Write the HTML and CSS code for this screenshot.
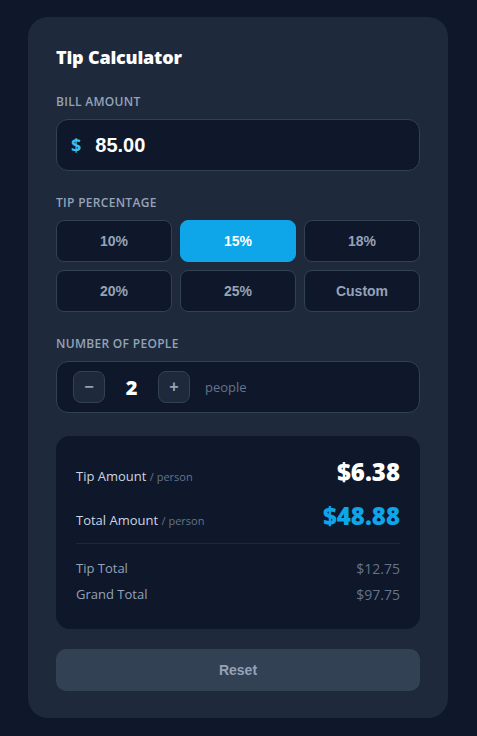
FILE: index.html
```html
<!DOCTYPE html>
<html lang="en">
<head>
<meta charset="utf-8">
<title>Tip Calculator</title>
<link rel="stylesheet" href="styles.css">
</head>
<body>
<main class="card">
  <h1 class="title">Tip Calculator</h1>

  <section class="section">
    <div class="label">Bill Amount</div>
    <div class="bill">
      <span class="currency">$</span>
      <input class="bill-input" type="text" value="85.00">
    </div>
  </section>

  <section class="section">
    <div class="label">Tip Percentage</div>
    <div class="tips">
      <button class="tip">10%</button>
      <button class="tip active">15%</button>
      <button class="tip">18%</button>
      <button class="tip">20%</button>
      <button class="tip">25%</button>
      <button class="tip">Custom</button>
    </div>
  </section>

  <section class="section">
    <div class="label">Number of People</div>
    <div class="people">
      <button class="step">&minus;</button>
      <span class="count">2</span>
      <button class="step">+</button>
      <span class="people-unit">people</span>
    </div>
  </section>

  <section class="results">
    <div class="row main">
      <span class="row-label">Tip Amount <small>/ person</small></span>
      <span class="big">$6.38</span>
    </div>
    <div class="row main">
      <span class="row-label">Total Amount <small>/ person</small></span>
      <span class="big accent">$48.88</span>
    </div>
    <div class="divider"></div>
    <div class="row minor">
      <span class="minor-label">Tip Total</span>
      <span class="minor-value">$12.75</span>
    </div>
    <div class="row minor">
      <span class="minor-label">Grand Total</span>
      <span class="minor-value">$97.75</span>
    </div>
  </section>

  <button class="reset">Reset</button>
</main>
</body>
</html>
```

FILE: styles.css
```css
* { box-sizing: border-box; }

html, body {
  margin: 0;
  padding: 0;
  background: #0f172a;
}

body {
  font-family: "Open Sans", "Noto Sans", sans-serif;
  color: #e2e8f0;
  padding: 17px 29px 18px 28px;
}

.card {
  width: 420px;
  background: #1e293b;
  border-radius: 20px;
  padding: 28px 28px 27px;
}

.title {
  margin: 0 0 25px;
  font-size: 18px;
  line-height: 24px;
  font-weight: 800;
  color: #ffffff;
  letter-spacing: -0.2px;
}

.section { margin-bottom: 24px; }
.section:nth-of-type(3) { margin-bottom: 23px; }

.label {
  font-size: 12px;
  line-height: 16px;
  font-weight: 600;
  text-transform: uppercase;
  letter-spacing: 0.3px;
  color: #94a3b8;
  margin-bottom: 9px;
}

.bill {
  height: 52px;
  display: flex;
  align-items: center;
  gap: 14px;
  padding: 0 14px;
  background: #0f172a;
  border: 1px solid #334155;
  border-radius: 12px;
}

.currency {
  font-size: 18px;
  font-weight: 700;
  color: #38bdf8;
}

.bill-input {
  flex: 1;
  min-width: 0;
  border: 0;
  outline: none;
  background: transparent;
  color: #ffffff;
  font-family: "Liberation Sans", Arial, sans-serif;
  font-size: 20px;
  font-weight: 700;
  padding: 0;
}

.tips {
  display: grid;
  grid-template-columns: repeat(3, 1fr);
  gap: 8px;
}

.tip {
  height: 42px;
  background: #0f172a;
  border: 1px solid #334155;
  border-radius: 8px;
  color: #94a3b8;
  font-family: "Liberation Sans", Arial, sans-serif;
  font-size: 14px;
  font-weight: 700;
  cursor: pointer;
}

.tip.active {
  background: #0ea5e9;
  border-color: #0ea5e9;
  color: #ffffff;
}

.people {
  height: 52px;
  display: flex;
  align-items: center;
  gap: 12px;
  padding: 0 16px;
  background: #0f172a;
  border: 1px solid #334155;
  border-radius: 12px;
}

.step {
  width: 32px;
  height: 32px;
  padding: 0;
  background: #1e293b;
  border: 1px solid #334155;
  border-radius: 8px;
  color: #94a3b8;
  font-family: "Liberation Sans", Arial, sans-serif;
  font-size: 16px;
  font-weight: 700;
  line-height: 1;
}

.count {
  min-width: 29px;
  text-align: center;
  font-size: 20px;
  font-weight: 800;
  color: #ffffff;
}

.people-unit {
  margin-left: 3px;
  font-size: 13px;
  color: #64748b;
}

.results {
  background: #0f172a;
  border-radius: 14px;
  padding: 20px 20px 26px;
  margin-bottom: 20px;
}

.row {
  display: flex;
  justify-content: space-between;
}

.row.main {
  height: 32px;
  align-items: baseline;
  line-height: 32px;
}
.row.main + .row.main { margin-top: 12px; }

.row-label {
  font-size: 13px;
  color: #cbd5e1;
}

.row-label small {
  font-size: 11px;
  color: #64748b;
}

.big {
  font-size: 24px;
  font-weight: 800;
  color: #ffffff;
}

.big.accent { color: #0ea5e9; }

.divider {
  height: 1px;
  background: #1e293b;
  margin: 11px 0 15px;
}

.row.minor {
  height: 18px;
  align-items: center;
}
.row.minor + .row.minor { margin-top: 8px; }

.minor-label {
  font-size: 13px;
  color: #94a3b8;
}

.minor-value {
  font-size: 14px;
  color: #64748b;
}

.reset {
  display: block;
  width: 100%;
  height: 42px;
  background: #334155;
  border: 0;
  border-radius: 10px;
  color: #94a3b8;
  font-family: "Liberation Sans", Arial, sans-serif;
  font-size: 14px;
  font-weight: 700;
}
```
